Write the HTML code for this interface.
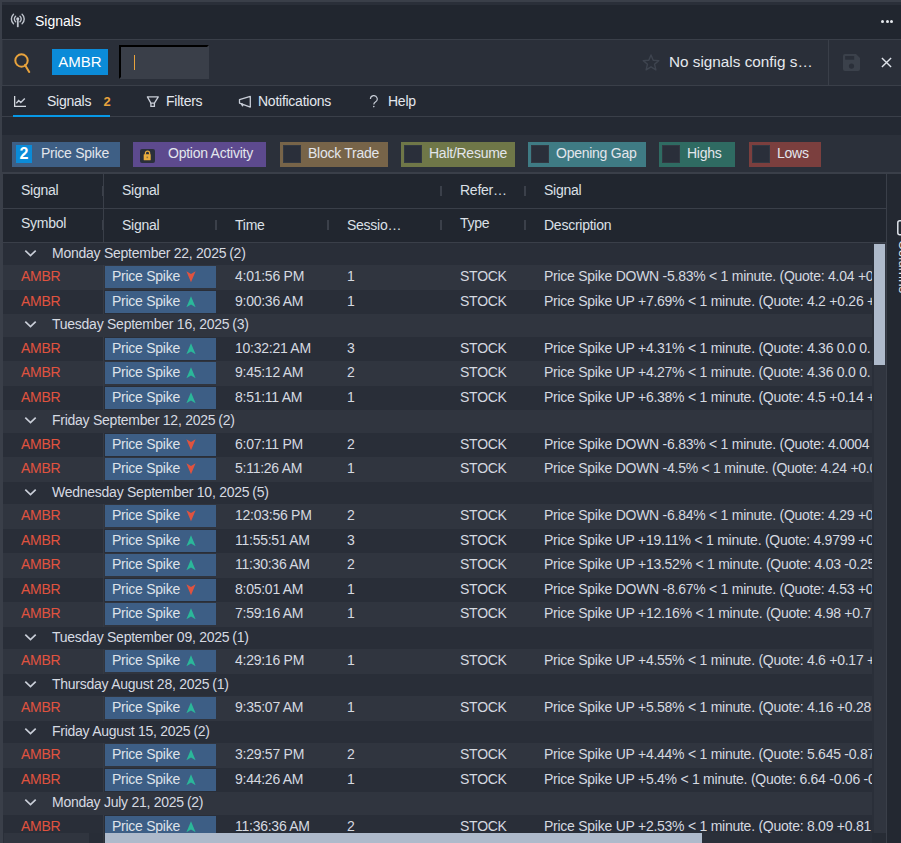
<!DOCTYPE html>
<html><head><meta charset="utf-8">
<style>
*{box-sizing:border-box;margin:0;padding:0}
html,body{width:901px;height:843px;overflow:hidden;background:#3a3f49;font-family:"Liberation Sans",sans-serif;font-size:14px;letter-spacing:-0.255px;color:#d5d9e0}
.abs{position:absolute}
#topband{left:2px;top:2px;width:899px;height:3px;background:#2a2f39}
#hdr{left:2px;top:5px;width:899px;height:34px;background:#21262f}
#hdr .title{position:absolute;left:33px;top:8px;font-size:14px;letter-spacing:0;color:#ffffff}
#hdr .ant{position:absolute;left:7.8px;top:8px}
#hdr .dots{position:absolute;left:879px;top:15px}
#hdr .dots i{position:absolute;top:0;width:3px;height:3px;border-radius:50%;background:#e6e9ee}
#b1{left:2px;top:39px;width:899px;height:1px;background:#3a3f49}
#srch{left:2px;top:40px;width:899px;height:45px;background:#2a2f39;border-left:1px solid #30353f}
#b2{left:2px;top:85px;width:898px;height:1px;background:#3a3f49}
#tabs{left:2px;top:86px;width:899px;height:30px;background:#242933;z-index:2}
#b3{left:2px;top:116px;width:898px;height:1px;background:#3a3f49}
#gap{left:2px;top:117px;width:899px;height:18px;background:#242933}
#chips{left:2px;top:135px;width:899px;height:37px;background:#2b303a}
#b4{left:2px;top:172px;width:898px;height:2px;background:#3a3f49}
#thead{left:3px;top:174px;width:883px;height:68px;background:#21262f}
#b5{left:3px;top:242px;width:883px;height:1px;background:#3a3f49}
#body{left:3px;top:242.6px;width:869px;height:590px;overflow:hidden;background:#262b34}
#vtrack{left:872px;top:243px;width:14px;height:590px;background:#2a2f39}
#vtrack2{left:874px;top:243px;width:12px;height:590px;background:#30353f}
#vthumb{left:874px;top:244px;width:11px;height:121px;background:#aebacb}
#htrack{left:3px;top:833px;width:869px;height:10px;background:#2a2f39}
#htrackM{left:89px;top:833px;width:14px;height:10px;background:#282d37}
#hline{left:103px;top:833px;width:1px;height:10px;background:#33383f}
#htrackL{left:4px;top:833px;width:85px;height:10px;background:#30353f}
#hthumb{left:105px;top:833px;width:597px;height:10px;background:#aebacb}
#corner{left:872px;top:833px;width:14px;height:10px;background:#272c35}
#vb{left:886px;top:174px;width:1px;height:669px;background:#3a3f49}
#side{left:887px;top:174px;width:14px;height:669px;background:#232831;overflow:hidden}

.chipF{position:absolute;top:142px;height:25px;color:#e3e6ec;font-size:14px;line-height:25px;white-space:nowrap}
.chipF .bx{position:absolute;left:3px;top:3px;width:18px;height:18px;background:#2a2f3a;border:1px solid #323842}
.chipF span.t{position:absolute;top:-1px}

.r{position:relative;white-space:nowrap;overflow:hidden}
.r.g{height:22.5px;line-height:22.5px}
.r.d{height:24.5px;line-height:24.5px}
.even{background:#292e38}
.odd{background:#30353f}
.chev{position:absolute;left:20.5px;top:6.4px;line-height:0}
.gt{position:absolute;left:49px;top:-0.7px;color:#d6dae2}
.c{position:absolute;top:-0.7px}
.sym{left:18px;color:#e0533f}
.vl{position:absolute;left:100px;top:0;width:1px;height:100%;background:#353a44}
.chip{position:absolute;left:102px;top:1.2px;width:111px;height:22px;line-height:21.7px;background:#3d5e85;color:#dfe3ea;padding-left:7px}
.chip .pt{position:absolute;left:7px;top:-1.9px;line-height:24.5px}
.chip .ar{position:absolute;left:81px;top:5px}
.tm{left:232px}
.ss{left:344px}
.ty{left:457px}
.ds{left:541px}
.th{position:absolute;color:#dce0e7;margin-top:-1px}
.sep{position:absolute;width:2px;height:10px;background:#3b404a}
</style></head><body>
<div class="abs" id="topband"></div>
<div class="abs" id="hdr">
  <svg class="ant" width="16" height="15" viewBox="0 0 16 15"><g fill="none" stroke="#bfc4cd" stroke-width="1.4" stroke-linecap="round"><path d="M3.5 1.2 A6.5 6.5 0 0 0 3.5 10.8"/><path d="M12.1 1.2 A6.5 6.5 0 0 1 12.1 10.8"/><path d="M5.6 3.2 A3.8 3.8 0 0 0 5.6 8.8"/><path d="M10 3.2 A3.8 3.8 0 0 1 10 8.8"/></g><circle cx="7.8" cy="5.7" r="1.5" fill="#c9ced8"/><rect x="6.9" y="5.7" width="1.8" height="8.5" rx="0.6" fill="#bfc4cd"/></svg>
  <div class="title">Signals</div>
  <div class="dots"><i style="left:0;top:0.3px"></i><i style="left:4.5px;top:0.3px"></i><i style="left:9px;top:0.3px"></i></div>
</div>
<div class="abs" id="b1"></div>
<div class="abs" id="srch">
  <svg style="position:absolute;left:11px;top:13px" width="17" height="20" viewBox="0 0 17 20"><circle cx="7.5" cy="7.5" r="6.2" fill="none" stroke="#e8a33d" stroke-width="2"/><path d="M11 12 L15.2 19" stroke="#e8a33d" stroke-width="2" stroke-linecap="round"/></svg>
  <div style="position:absolute;left:49px;top:9px;width:56px;height:26px;background:#0b8bd8;color:#fff;font-size:15px;letter-spacing:0;line-height:26px;text-align:center">AMBR</div>
  <div style="position:absolute;left:116px;top:5px;width:90px;height:34px;background:#3a3f49;border-top:2px solid #000;border-left:2px solid #000;border-bottom:2px solid #3a3f49;border-right:2px solid #3a3f49"></div>
  <div style="position:absolute;left:131px;top:15px;width:1.4px;height:15px;background:#e8a33d"></div>
  <svg style="position:absolute;left:639px;top:14px" width="18" height="17" viewBox="0 0 18 17"><path d="M9 1 L11.2 6.2 L16.8 6.6 L12.5 10.2 L13.9 15.8 L9 12.8 L4.1 15.8 L5.5 10.2 L1.2 6.6 L6.8 6.2 Z" fill="none" stroke="#3e444f" stroke-width="1.4" stroke-linejoin="round"/></svg>
  <div style="position:absolute;left:666px;top:13px;font-size:15.3px;letter-spacing:0;color:#e6e9ee;white-space:nowrap">No signals config s…</div>
  <div style="position:absolute;left:825px;top:0;width:1px;height:45px;background:#3a3f49"></div>
  <svg style="position:absolute;left:840px;top:14px" width="17" height="17" viewBox="0 0 17 17"><path d="M2 0 H13 L17 4 V15 A2 2 0 0 1 15 17 H2 A2 2 0 0 1 0 15 V2 A2 2 0 0 1 2 0 Z" fill="#3b414b"/><rect x="2.2" y="2" width="9" height="3.7" fill="#2a2f39"/><circle cx="8.5" cy="12.1" r="2.6" fill="#2a2f39"/></svg>
  <svg style="position:absolute;left:877.5px;top:17.3px" width="11" height="11" viewBox="0 0 11 11"><path d="M0.9 0.9 L10.1 10.1 M10.1 0.9 L0.9 10.1" stroke="#dfe3ea" stroke-width="1.4"/></svg>
</div>
<div class="abs" id="b2"></div>
<div class="abs" id="tabs">
  <svg style="position:absolute;left:12px;top:10px" width="13" height="12" viewBox="0 0 13 12"><path d="M0.65 0 V10.35 H12" fill="none" stroke="#d5d9e0" stroke-width="1.3"/><path d="M2.3 7.3 L4.7 4.6 L6.8 6.5 L10.8 2.5" fill="none" stroke="#c9ced8" stroke-width="1.4"/></svg>
  <div style="position:absolute;left:45px;top:6.5px;color:#e3e7ee;font-weight:normal">Signals</div>
  <div style="position:absolute;left:101.5px;top:8px;color:#e8a33d;font-weight:bold;font-size:13px;letter-spacing:0">2</div>
  <div style="position:absolute;left:11px;top:29px;width:97px;height:2px;background:#0798e6"></div>
  <svg style="position:absolute;left:144px;top:9px" width="14" height="13" viewBox="0 0 14 13"><path d="M1.4 1.9 H12.3 L8.4 8.1 H4.9 Z" fill="none" stroke="#c9ced8" stroke-width="1.3" stroke-linejoin="round"/><path d="M4.9 8.1 V11.35 H8.4 V8.1" fill="none" stroke="#c9ced8" stroke-width="1.3"/></svg>
  <div style="position:absolute;left:164px;top:6.5px;color:#e3e7ee">Filters</div>
  <svg style="position:absolute;left:236px;top:9px" width="14" height="14" viewBox="0 0 14 14"><path d="M12.3 1.4 V12.1 L1.5 8.1 V4.6 Z" fill="none" stroke="#c9ced8" stroke-width="1.3" stroke-linejoin="round"/><path d="M3.8 9 L4.6 10.6" stroke="#c9ced8" stroke-width="1.7" stroke-linecap="round"/></svg>
  <div style="position:absolute;left:256px;top:6.5px;color:#e3e7ee">Notifications</div>
  <svg style="position:absolute;left:367px;top:9px" width="10" height="13" viewBox="0 0 10 13"><path d="M1.4 4 A3.4 3.4 0 1 1 6.4 7 C5.2 7.7 4.8 8.3 4.8 9.6" fill="none" stroke="#c9ced8" stroke-width="1.15"/><circle cx="4.8" cy="11.6" r="0.8" fill="#c9ced8"/></svg>
  <div style="position:absolute;left:386px;top:6.5px;color:#e3e7ee">Help</div>
</div>
<div class="abs" id="b3"></div>
<div class="abs" id="gap"></div>
<div class="abs" id="chips"></div>
<div class="chipF" style="left:12px;width:108px;background:#3e5f85"><span style="position:absolute;left:4px;top:3px;width:16px;height:18px;background:#0b8bd8;color:#fff;font-weight:bold;font-size:16px;letter-spacing:0;line-height:18px;text-align:center">2</span><span class="t" style="left:29px">Price Spike</span></div>
<div class="chipF" style="left:133px;width:133px;background:#5d4a8e"><span style="position:absolute;left:7px;top:7px;width:15px;height:14px;background:#2a2f3a;border-radius:2px"></span><svg style="position:absolute;left:10px;top:8px" width="9" height="11" viewBox="0 0 9 11"><path d="M2.4 4.8 V3.2 A2.1 2.1 0 0 1 6.6 3.2 V4.8" fill="none" stroke="#eaae3e" stroke-width="1.3"/><rect x="0.7" y="4.3" width="7" height="5.9" rx="0.5" fill="#eaae3e"/><rect x="3.5" y="6.6" width="1.6" height="1.6" fill="#8f7440"/></svg><span class="t" style="left:35px">Option Activity</span></div>
<div class="chipF" style="left:280px;width:108px;background:#776449"><span class="bx"></span><span class="t" style="left:28px">Block Trade</span></div>
<div class="chipF" style="left:401px;width:114px;background:#6f7748"><span class="bx"></span><span class="t" style="left:28px">Halt/Resume</span></div>
<div class="chipF" style="left:528px;width:118px;background:#3f7b84"><span class="bx"></span><span class="t" style="left:28px">Opening Gap</span></div>
<div class="chipF" style="left:659px;width:76px;background:#2f6b62"><span class="bx"></span><span class="t" style="left:28px">Highs</span></div>
<div class="chipF" style="left:749px;width:72px;background:#7b3f3e"><span class="bx"></span><span class="t" style="left:28px">Lows</span></div>
<div class="abs" id="b4"></div>
<div class="abs" id="thead">
  <div style="position:absolute;left:0;top:34px;width:883px;height:1px;background:#3a3f49"></div>
  <div style="position:absolute;left:100px;top:0;width:1px;height:68px;background:#3a3f49"></div>
  <div class="th" style="left:18px;top:9px">Signal</div>
  <div class="th" style="left:18px;top:42px">Symbol</div>
  <div class="sep" style="left:99px;top:12px;width:1px"></div>
  <div class="sep" style="left:99px;top:46px;width:1px"></div>
  <div class="th" style="left:119px;top:9px">Signal</div>
  <div class="sep" style="left:437px;top:12px"></div>
  <div class="th" style="left:457px;top:9px">Refer…</div>
  <div class="sep" style="left:521px;top:12px"></div>
  <div class="th" style="left:541px;top:9px">Signal</div>
  <div class="th" style="left:119px;top:44px">Signal</div>
  <div class="sep" style="left:212px;top:46px"></div>
  <div class="th" style="left:232px;top:44px">Time</div>
  <div class="sep" style="left:324px;top:46px"></div>
  <div class="th" style="left:344px;top:44px">Sessio…</div>
  <div class="sep" style="left:437px;top:46px"></div>
  <div class="th" style="left:457px;top:42px">Type</div>
  <div class="sep" style="left:521px;top:46px"></div>
  <div class="th" style="left:541px;top:44px">Description</div>
</div>
<div class="abs" id="b5"></div>
<div class="abs" id="body">
<div class="r g even"><span class="chev"><svg width="13" height="8" viewBox="0 0 13 8"><path d="M1.3 1.6 L6.5 6.5 L11.7 1.6" fill="none" stroke="#c9ced8" stroke-width="1.7"/></svg></span><span class="gt">Monday September 22, 2025<span style="margin-left:3px">(2)</span></span></div>
<div class="r d odd"><span class="c sym">AMBR</span><span class="vl"></span><span class="chip"><span class="pt">Price Spike</span><svg class="ar" width="10" height="12" viewBox="0 0 10 12"><path d="M5 11.3 L9.6 0.3 L5 3 L0.4 0.3 Z" fill="#e0533f"/></svg></span><span class="c tm">4:01:56 PM</span><span class="c ss">1</span><span class="c ty">STOCK</span><span class="c ds">Price Spike DOWN -5.83% &lt; 1 minute. (Quote: 4.04 +0.00 0.00 0.00)</span></div>
<div class="r d even"><span class="c sym">AMBR</span><span class="vl"></span><span class="chip"><span class="pt">Price Spike</span><svg class="ar" width="10" height="12" viewBox="0 0 10 12"><path d="M5 0.3 L9.6 11.3 L5 8.6 L0.4 11.3 Z" fill="#2bb79a"/></svg></span><span class="c tm">9:00:36 AM</span><span class="c ss">1</span><span class="c ty">STOCK</span><span class="c ds">Price Spike UP +7.69% &lt; 1 minute. (Quote: 4.2 +0.26 +6.60%)</span></div>
<div class="r g odd"><span class="chev"><svg width="13" height="8" viewBox="0 0 13 8"><path d="M1.3 1.6 L6.5 6.5 L11.7 1.6" fill="none" stroke="#c9ced8" stroke-width="1.7"/></svg></span><span class="gt">Tuesday September 16, 2025<span style="margin-left:3px">(3)</span></span></div>
<div class="r d even"><span class="c sym">AMBR</span><span class="vl"></span><span class="chip"><span class="pt">Price Spike</span><svg class="ar" width="10" height="12" viewBox="0 0 10 12"><path d="M5 0.3 L9.6 11.3 L5 8.6 L0.4 11.3 Z" fill="#2bb79a"/></svg></span><span class="c tm">10:32:21 AM</span><span class="c ss">3</span><span class="c ty">STOCK</span><span class="c ds">Price Spike UP +4.31% &lt; 1 minute. (Quote: 4.36 0.0 0. 00%)</span></div>
<div class="r d odd"><span class="c sym">AMBR</span><span class="vl"></span><span class="chip"><span class="pt">Price Spike</span><svg class="ar" width="10" height="12" viewBox="0 0 10 12"><path d="M5 0.3 L9.6 11.3 L5 8.6 L0.4 11.3 Z" fill="#2bb79a"/></svg></span><span class="c tm">9:45:12 AM</span><span class="c ss">2</span><span class="c ty">STOCK</span><span class="c ds">Price Spike UP +4.27% &lt; 1 minute. (Quote: 4.36 0.0 0. 00%)</span></div>
<div class="r d even"><span class="c sym">AMBR</span><span class="vl"></span><span class="chip"><span class="pt">Price Spike</span><svg class="ar" width="10" height="12" viewBox="0 0 10 12"><path d="M5 0.3 L9.6 11.3 L5 8.6 L0.4 11.3 Z" fill="#2bb79a"/></svg></span><span class="c tm">8:51:11 AM</span><span class="c ss">1</span><span class="c ty">STOCK</span><span class="c ds">Price Spike UP +6.38% &lt; 1 minute. (Quote: 4.5 +0.14 +3.21%)</span></div>
<div class="r g odd"><span class="chev"><svg width="13" height="8" viewBox="0 0 13 8"><path d="M1.3 1.6 L6.5 6.5 L11.7 1.6" fill="none" stroke="#c9ced8" stroke-width="1.7"/></svg></span><span class="gt">Friday September 12, 2025<span style="margin-left:3px">(2)</span></span></div>
<div class="r d even"><span class="c sym">AMBR</span><span class="vl"></span><span class="chip"><span class="pt">Price Spike</span><svg class="ar" width="10" height="12" viewBox="0 0 10 12"><path d="M5 11.3 L9.6 0.3 L5 3 L0.4 0.3 Z" fill="#e0533f"/></svg></span><span class="c tm">6:07:11 PM</span><span class="c ss">2</span><span class="c ty">STOCK</span><span class="c ds">Price Spike DOWN -6.83% &lt; 1 minute. (Quote: 4.0004 -0.08)</span></div>
<div class="r d odd"><span class="c sym">AMBR</span><span class="vl"></span><span class="chip"><span class="pt">Price Spike</span><svg class="ar" width="10" height="12" viewBox="0 0 10 12"><path d="M5 11.3 L9.6 0.3 L5 3 L0.4 0.3 Z" fill="#e0533f"/></svg></span><span class="c tm">5:11:26 AM</span><span class="c ss">1</span><span class="c ty">STOCK</span><span class="c ds">Price Spike DOWN -4.5% &lt; 1 minute. (Quote: 4.24 +0.06 +1.4%)</span></div>
<div class="r g even"><span class="chev"><svg width="13" height="8" viewBox="0 0 13 8"><path d="M1.3 1.6 L6.5 6.5 L11.7 1.6" fill="none" stroke="#c9ced8" stroke-width="1.7"/></svg></span><span class="gt">Wednesday September 10, 2025<span style="margin-left:3px">(5)</span></span></div>
<div class="r d odd"><span class="c sym">AMBR</span><span class="vl"></span><span class="chip"><span class="pt">Price Spike</span><svg class="ar" width="10" height="12" viewBox="0 0 10 12"><path d="M5 11.3 L9.6 0.3 L5 3 L0.4 0.3 Z" fill="#e0533f"/></svg></span><span class="c tm">12:03:56 PM</span><span class="c ss">2</span><span class="c ty">STOCK</span><span class="c ds">Price Spike DOWN -6.84% &lt; 1 minute. (Quote: 4.29 +0.01)</span></div>
<div class="r d even"><span class="c sym">AMBR</span><span class="vl"></span><span class="chip"><span class="pt">Price Spike</span><svg class="ar" width="10" height="12" viewBox="0 0 10 12"><path d="M5 0.3 L9.6 11.3 L5 8.6 L0.4 11.3 Z" fill="#2bb79a"/></svg></span><span class="c tm">11:55:51 AM</span><span class="c ss">3</span><span class="c ty">STOCK</span><span class="c ds">Price Spike UP +19.11% &lt; 1 minute. (Quote: 4.9799 +0.7)</span></div>
<div class="r d odd"><span class="c sym">AMBR</span><span class="vl"></span><span class="chip"><span class="pt">Price Spike</span><svg class="ar" width="10" height="12" viewBox="0 0 10 12"><path d="M5 0.3 L9.6 11.3 L5 8.6 L0.4 11.3 Z" fill="#2bb79a"/></svg></span><span class="c tm">11:30:36 AM</span><span class="c ss">2</span><span class="c ty">STOCK</span><span class="c ds">Price Spike UP +13.52% &lt; 1 minute. (Quote: 4.03 -0.25 -5%)</span></div>
<div class="r d even"><span class="c sym">AMBR</span><span class="vl"></span><span class="chip"><span class="pt">Price Spike</span><svg class="ar" width="10" height="12" viewBox="0 0 10 12"><path d="M5 11.3 L9.6 0.3 L5 3 L0.4 0.3 Z" fill="#e0533f"/></svg></span><span class="c tm">8:05:01 AM</span><span class="c ss">1</span><span class="c ty">STOCK</span><span class="c ds">Price Spike DOWN -8.67% &lt; 1 minute. (Quote: 4.53 +0.01)</span></div>
<div class="r d odd"><span class="c sym">AMBR</span><span class="vl"></span><span class="chip"><span class="pt">Price Spike</span><svg class="ar" width="10" height="12" viewBox="0 0 10 12"><path d="M5 0.3 L9.6 11.3 L5 8.6 L0.4 11.3 Z" fill="#2bb79a"/></svg></span><span class="c tm">7:59:16 AM</span><span class="c ss">1</span><span class="c ty">STOCK</span><span class="c ds">Price Spike UP +12.16% &lt; 1 minute. (Quote: 4.98 +0.7 +16%)</span></div>
<div class="r g even"><span class="chev"><svg width="13" height="8" viewBox="0 0 13 8"><path d="M1.3 1.6 L6.5 6.5 L11.7 1.6" fill="none" stroke="#c9ced8" stroke-width="1.7"/></svg></span><span class="gt">Tuesday September 09, 2025<span style="margin-left:3px">(1)</span></span></div>
<div class="r d odd"><span class="c sym">AMBR</span><span class="vl"></span><span class="chip"><span class="pt">Price Spike</span><svg class="ar" width="10" height="12" viewBox="0 0 10 12"><path d="M5 0.3 L9.6 11.3 L5 8.6 L0.4 11.3 Z" fill="#2bb79a"/></svg></span><span class="c tm">4:29:16 PM</span><span class="c ss">1</span><span class="c ty">STOCK</span><span class="c ds">Price Spike UP +4.55% &lt; 1 minute. (Quote: 4.6 +0.17 +3.8%)</span></div>
<div class="r g even"><span class="chev"><svg width="13" height="8" viewBox="0 0 13 8"><path d="M1.3 1.6 L6.5 6.5 L11.7 1.6" fill="none" stroke="#c9ced8" stroke-width="1.7"/></svg></span><span class="gt">Thursday August 28, 2025<span style="margin-left:3px">(1)</span></span></div>
<div class="r d odd"><span class="c sym">AMBR</span><span class="vl"></span><span class="chip"><span class="pt">Price Spike</span><svg class="ar" width="10" height="12" viewBox="0 0 10 12"><path d="M5 0.3 L9.6 11.3 L5 8.6 L0.4 11.3 Z" fill="#2bb79a"/></svg></span><span class="c tm">9:35:07 AM</span><span class="c ss">1</span><span class="c ty">STOCK</span><span class="c ds">Price Spike UP +5.58% &lt; 1 minute. (Quote: 4.16 +0.28 +7%)</span></div>
<div class="r g even"><span class="chev"><svg width="13" height="8" viewBox="0 0 13 8"><path d="M1.3 1.6 L6.5 6.5 L11.7 1.6" fill="none" stroke="#c9ced8" stroke-width="1.7"/></svg></span><span class="gt">Friday August 15, 2025<span style="margin-left:3px">(2)</span></span></div>
<div class="r d odd"><span class="c sym">AMBR</span><span class="vl"></span><span class="chip"><span class="pt">Price Spike</span><svg class="ar" width="10" height="12" viewBox="0 0 10 12"><path d="M5 0.3 L9.6 11.3 L5 8.6 L0.4 11.3 Z" fill="#2bb79a"/></svg></span><span class="c tm">3:29:57 PM</span><span class="c ss">2</span><span class="c ty">STOCK</span><span class="c ds">Price Spike UP +4.44% &lt; 1 minute. (Quote: 5.645 -0.87 -13%)</span></div>
<div class="r d even"><span class="c sym">AMBR</span><span class="vl"></span><span class="chip"><span class="pt">Price Spike</span><svg class="ar" width="10" height="12" viewBox="0 0 10 12"><path d="M5 0.3 L9.6 11.3 L5 8.6 L0.4 11.3 Z" fill="#2bb79a"/></svg></span><span class="c tm">9:44:26 AM</span><span class="c ss">1</span><span class="c ty">STOCK</span><span class="c ds">Price Spike UP +5.4% &lt; 1 minute. (Quote: 6.64 -0.06 -0.9%)</span></div>
<div class="r g odd"><span class="chev"><svg width="13" height="8" viewBox="0 0 13 8"><path d="M1.3 1.6 L6.5 6.5 L11.7 1.6" fill="none" stroke="#c9ced8" stroke-width="1.7"/></svg></span><span class="gt">Monday July 21, 2025<span style="margin-left:3px">(2)</span></span></div>
<div class="r d even"><span class="c sym">AMBR</span><span class="vl"></span><span class="chip"><span class="pt">Price Spike</span><svg class="ar" width="10" height="12" viewBox="0 0 10 12"><path d="M5 0.3 L9.6 11.3 L5 8.6 L0.4 11.3 Z" fill="#2bb79a"/></svg></span><span class="c tm">11:36:36 AM</span><span class="c ss">2</span><span class="c ty">STOCK</span><span class="c ds">Price Spike UP +2.53% &lt; 1 minute. (Quote: 8.09 +0.81 +11%)</span></div>
<div class="r d odd"><span class="c sym">AMBR</span><span class="vl"></span><span class="chip"><span class="pt">Price Spike</span><svg class="ar" width="10" height="12" viewBox="0 0 10 12"><path d="M5 0.3 L9.6 11.3 L5 8.6 L0.4 11.3 Z" fill="#2bb79a"/></svg></span><span class="c tm">10:12:00 AM</span><span class="c ss">1</span><span class="c ty">STOCK</span><span class="c ds">Price Spike UP +3.10% &lt; 1 minute. (Quote: 7.28 +0.22 +3%)</span></div>
</div>
<div class="abs" id="vtrack"></div><div class="abs" id="vtrack2"></div>
<div class="abs" id="vthumb"></div>
<div class="abs" id="htrack"></div>
<div class="abs" id="htrackL"></div><div class="abs" id="htrackM"></div><div class="abs" id="hline"></div>
<div class="abs" id="hthumb"></div>
<div class="abs" id="corner"></div>
<div class="abs" id="vb"></div>
<div class="abs" id="side">
  <svg style="position:absolute;left:10px;top:46px" width="14" height="16" viewBox="0 0 14 16"><rect x="0.8" y="0.8" width="12" height="14" rx="2" fill="none" stroke="#dfe3ea" stroke-width="1.5"/></svg>
  <div style="position:absolute;left:8.5px;top:66px;writing-mode:vertical-rl;color:#e3e7ee;font-size:13.5px;letter-spacing:0">Columns</div>
</div>
</body></html>
